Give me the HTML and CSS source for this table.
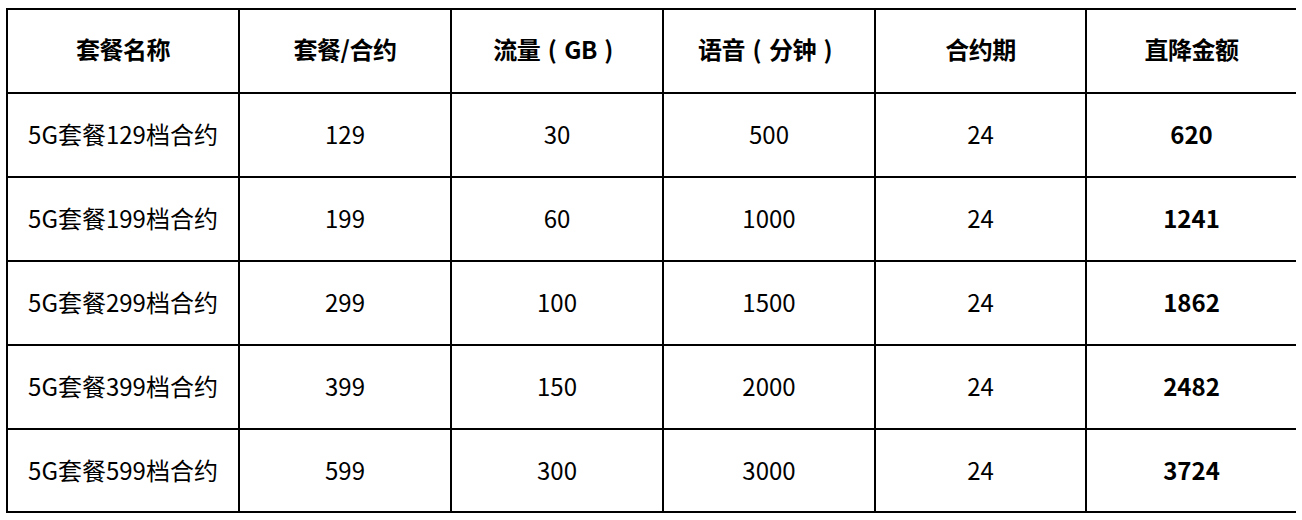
FILE: index.html
```html
<!DOCTYPE html>
<html lang="zh-CN">
<head>
<meta charset="utf-8">
<title>5G套餐</title>
<link rel="stylesheet" href="styles.css">
</head>
<body>
<table class="plans">
  <colgroup>
    <col class="c-name">
    <col class="c-std">
    <col class="c-std">
    <col class="c-std">
    <col class="c-sm">
    <col class="c-sm">
  </colgroup>
  <thead>
    <tr>
      <th>套餐名称</th>
      <th>套餐/合约</th>
      <th>流量<span class="paren">(</span>GB<span class="paren">)</span></th>
      <th>语音<span class="paren">(</span>分钟<span class="paren">)</span></th>
      <th>合约期</th>
      <th>直降金额</th>
    </tr>
  </thead>
  <tbody>
    <tr><td>5G套餐129档合约</td><td>129</td><td>30</td><td>500</td><td>24</td><td class="strong">620</td></tr>
    <tr><td>5G套餐199档合约</td><td>199</td><td>60</td><td>1000</td><td>24</td><td class="strong">1241</td></tr>
    <tr><td>5G套餐299档合约</td><td>299</td><td>100</td><td>1500</td><td>24</td><td class="strong">1862</td></tr>
    <tr><td>5G套餐399档合约</td><td>399</td><td>150</td><td>2000</td><td>24</td><td class="strong">2482</td></tr>
    <tr class="last"><td>5G套餐599档合约</td><td>599</td><td>300</td><td>3000</td><td>24</td><td class="strong">3724</td></tr>
  </tbody>
</table>
</body>
</html>
```
FILE: styles.css
```css
html, body {
  background: #ffffff;
}
body {
  margin: 8px 6px;
  font-family: "Noto Sans CJK SC", "Noto Sans", sans-serif;
  color: #000;
}
.plans {
  border-collapse: collapse;
  table-layout: fixed;
  width: 1292px;
}
.c-name { width: 232px; }
.c-std { width: 212px; }
.c-sm { width: 211px; }
.plans th,
.plans td {
  border: 2px solid #000;
  padding: 0;
  text-align: center;
  vertical-align: middle;
  font-size: 24px;
  line-height: 1;
  white-space: nowrap;
}
.plans th {
  height: 78px;
  padding-bottom: 4px;
  font-weight: 700;
  letter-spacing: -0.5px;
}
.plans th .paren {
  display: inline-block;
  width: 24px;
  text-align: center;
  letter-spacing: 0;
}
.plans td {
  height: 80px;
  padding-bottom: 2px;
  font-weight: 400;
}
.plans td.strong {
  font-weight: 700;
}
.plans tr.last td {
  height: 79px;
}
```
